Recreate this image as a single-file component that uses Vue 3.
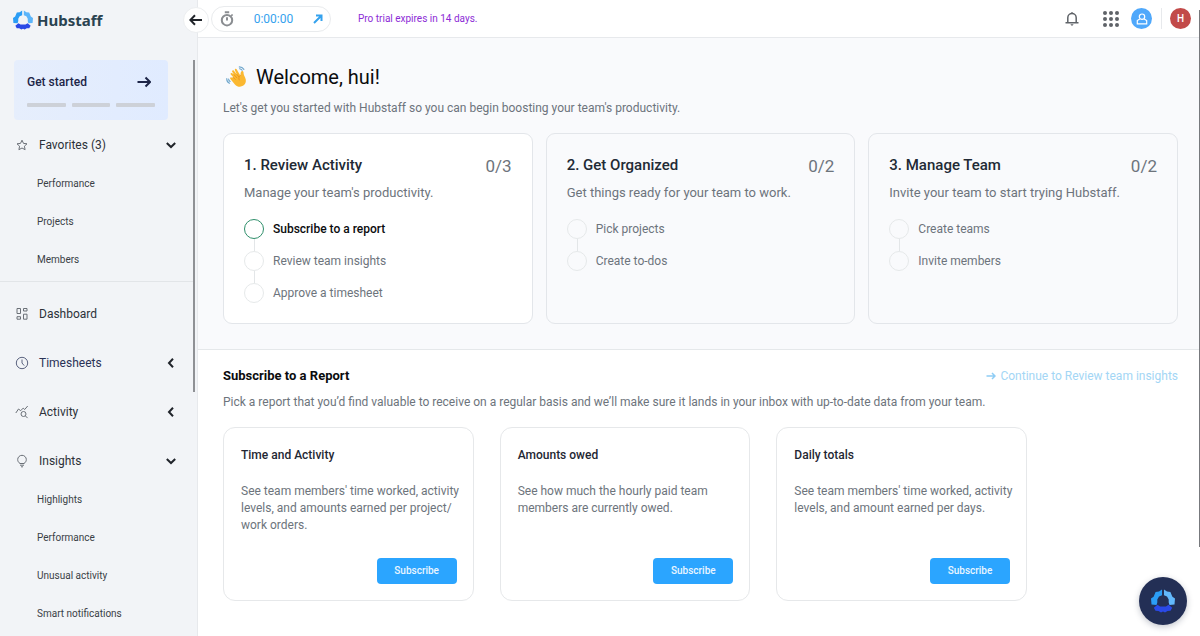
<script setup>
const favorites = ['Performance', 'Projects', 'Members']

const insights = ['Highlights', 'Performance', 'Unusual activity', 'Smart notifications']

const stages = [
  {
    title: '1. Review Activity',
    text: "Manage your team's productivity.",
    count: '0/3',
    active: true,
    steps: ['Subscribe to a report', 'Review team insights', 'Approve a timesheet'],
  },
  {
    title: '2. Get Organized',
    text: 'Get things ready for your team to work.',
    count: '0/2',
    active: false,
    steps: ['Pick projects', 'Create to-dos'],
  },
  {
    title: '3. Manage Team',
    text: 'Invite your team to start trying Hubstaff.',
    count: '0/2',
    active: false,
    steps: ['Create teams', 'Invite members'],
  },
]

const reports = [
  {
    title: 'Time and Activity',
    text: "See team members' time worked, activity levels, and amounts earned per project/ work orders.",
  },
  {
    title: 'Amounts owed',
    text: 'See how much the hourly paid team members are currently owed.',
  },
  {
    title: 'Daily totals',
    text: "See team members' time worked, activity levels, and amount earned per days.",
  },
]
</script>

<template>
  <div class="app">
    <aside class="sidebar">
      <a class="brand" href="#">
        <svg class="brand-mark" viewBox="0 0 24 24" aria-hidden="true">
          <path fill="#2b9df5" d="M11 .5v5.700L8 7.500 6.300 10.500v3L5.500 16 .5 15.500 0 9.500l2.600-1.800L4.600 3 8 2.600z" />
          <path fill="#5cb5fa" d="M13 .5v5.700l3 1.300 1.700 3v3l.8 2.500 5-.5.5-6-2.600-1.800L19.400 3 16 2.600z" />
          <path fill="#2a49e6" d="M6.500 15.800 9 17.500h6l2.500-1.700 3.700 3-1.700 3-3 .2L14 23.500l-2-1-2 1L7.500 22l-3-.2-1.700-3z" />
        </svg>
        <span>Hubstaff</span>
      </a>
      <button class="collapse" type="button" aria-label="Collapse menu">
        <svg viewBox="0 0 14 12" aria-hidden="true"><path d="M13 6H1.500M6 1.300 1.300 6 6 10.700" /></svg>
      </button>

      <a class="start" href="#">
        <span class="start-row">
          <span>Get started</span>
          <svg viewBox="0 0 14 12" aria-hidden="true"><path d="M.5 6h12M8.500 1.500 13 6l-4.500 4.500" /></svg>
        </span>
        <span class="bars"><i></i><i></i><i></i></span>
      </a>

      <nav class="nav" aria-label="Main">
        <div class="group">
          <button class="item" type="button" aria-expanded="true">
            <svg class="ico" viewBox="0 0 14 14" aria-hidden="true"><path d="m7 2.200 1.500 3.200 3.500.4-2.600 2.400.7 3.500L7 10l-3.100 1.700.7-3.500L2 5.800l3.500-.4z" /></svg>
            <span>Favorites (3)</span>
            <svg class="chev" viewBox="0 0 10 10" aria-hidden="true"><path d="M.8 3 5 7l4.200-4" /></svg>
          </button>
          <a v-for="name in favorites" :key="name" class="sub" href="#">{{ name }}</a>
        </div>

        <div class="group group-main">
          <a class="item" href="#">
            <svg class="ico" viewBox="0 0 14 14" aria-hidden="true"><path d="M2 1.500h3.500v5H2zM8.500 1.500H12V4H8.500zM2 9.700h3.500v2.500H2zM8.500 7.200H12v5H8.500z" /></svg>
            <span>Dashboard</span>
          </a>
          <button class="item navy" type="button" aria-expanded="false">
            <svg class="ico" viewBox="0 0 14 14" aria-hidden="true"><circle cx="7" cy="7" r="5.700" /><path d="M7 3.500V7l2.200 2.600" /></svg>
            <span>Timesheets</span>
            <svg class="chev" viewBox="0 0 10 10" aria-hidden="true"><path d="M7 .8 3 5l4 4.200" /></svg>
          </button>
          <button class="item" type="button" aria-expanded="false">
            <svg class="ico" viewBox="0 0 14 14" aria-hidden="true"><path d="M.8 8 3.500 4l2.200 1.700 2.500-2.600L9.700 4.500l3-3.500" /><circle cx="8.500" cy="9" r="2.500" /><path d="m10.400 10.900 2.200 2.200" /></svg>
            <span>Activity</span>
            <svg class="chev" viewBox="0 0 10 10" aria-hidden="true"><path d="M7 .8 3 5l4 4.200" /></svg>
          </button>
          <div>
            <button class="item" type="button" aria-expanded="true">
              <svg class="ico" viewBox="0 0 14 14" aria-hidden="true"><path d="M5 9.500C3.500 8.500 2.700 7.200 2.700 5.600a4.300 4.300 0 0 1 8.600 0c0 1.600-.8 2.900-2.300 3.900zM5 11.200h4M6 12.800h2" /></svg>
              <span>Insights</span>
              <svg class="chev" viewBox="0 0 10 10" aria-hidden="true"><path d="M.8 3 5 7l4.200-4" /></svg>
            </button>
            <a v-for="name in insights" :key="name" class="sub" href="#">{{ name }}</a>
          </div>
        </div>
      </nav>
      <i class="side-thumb"></i>
    </aside>

    <div class="content">
      <header class="topbar">
        <div class="timer">
          <svg class="watch" viewBox="0 0 14 16" aria-hidden="true"><circle cx="7" cy="9.200" r="5.200" /><path d="M4.800 1.200h4.400M7 6.200v3.300M11.300 3.600l1.200 1.200" /></svg>
          <span>0:00:00</span>
          <svg class="out" viewBox="0 0 10 10" aria-hidden="true"><path d="M1 9 8 2M3 1.500h5.500V7" /></svg>
        </div>
        <a class="trial" href="#">Pro trial expires in 14 days.</a>
        <div class="tools">
          <button class="tool bell" type="button" aria-label="Notifications">
            <svg viewBox="0 0 14 14" aria-hidden="true"><path d="M.5 10.700h13M2.800 10.500V5.800a4.200 4.200 0 0 1 8.400 0v4.700" /><path d="M5.300 12.200h3.400L7 13.900zM6.200.3h1.600V2H6.200z" class="solid" /></svg>
          </button>
          <button class="tool apps" type="button" aria-label="Apps">
            <svg viewBox="0 0 16 16" aria-hidden="true">
              <template v-for="y in 3" :key="y"><circle v-for="x in 3" :key="x" :cx="x * 6 - 4" :cy="y * 6 - 4" r="2" /></template>
            </svg>
          </button>
          <button class="tool person" type="button" aria-label="Organization">
            <svg viewBox="0 0 12 12" aria-hidden="true"><circle cx="6" cy="3.700" r="2.700" /><path d="M3.800 6 1.300 7.600v3.200h9.400V7.600L8.200 6" /></svg>
          </button>
          <button class="tool avatar" type="button" aria-label="Account">H</button>
        </div>
      </header>

      <main>
        <section class="hero">
          <h1>
            <svg class="wave" viewBox="0 0 22 22" aria-hidden="true">
              <path fill="#fbb831" d="M7.300 11.300 4.800 8.600c-.9-1.100.5-2.300 1.500-1.400L8 8.700 6.200 5.800c-.7-1.200.9-2.200 1.700-1.100l3 3.800-2-4.300c-.5-1.300 1.200-2 1.900-.8l3.500 6.100c.4-1.300.1-2.800.9-4 .8-1.100 2.300-.4 2.300.8 0 1.700.5 3 1.600 5.200 1.500 3.200.9 6.300-1.700 8.100-2.800 1.900-6.200 1.300-8.500-1.200L4.400 13c-.9-1.100.4-2.200 1.400-1.300z" />
              <path fill="none" stroke="#e58e1e" stroke-width=".8" stroke-linecap="round" d="m7.300 11.500 2 2M8 8.700l2.900 3.100M10.900 8.500l2 2.300M14.200 9.600c-1.700 1.300-1.700 3-1 4.300" />
              <path fill="none" stroke="#6ea6cc" stroke-width="1.100" stroke-linecap="round" d="M.8 12.500c-.2 2 .7 3.800 2.700 4.800M2.600 13c0 1 .6 1.900 1.500 2.500M13.300.9c2 0 3.600.9 4.600 2.500M13.500 2.800c1.100.1 2 .6 2.600 1.500" />
            </svg>
            Welcome, hui!
          </h1>
          <p class="lead">Let's get you started with Hubstaff so you can begin boosting your team's productivity.</p>
          <div class="stages">
            <article v-for="stage in stages" :key="stage.title" class="stage" :class="{ active: stage.active }">
              <div class="stage-head">
                <h2>{{ stage.title }}</h2>
                <span class="count">{{ stage.count }}</span>
              </div>
              <p>{{ stage.text }}</p>
              <ol>
                <li v-for="step in stage.steps" :key="step"><i class="dot"></i>{{ step }}</li>
              </ol>
            </article>
          </div>
        </section>

        <section class="reports">
          <div class="reports-head">
            <h2>Subscribe to a Report</h2>
            <a href="#">
              <svg viewBox="0 0 10 8" aria-hidden="true"><path d="M.5 4h8.500M6 1l3 3-3 3" /></svg>
              Continue to Review team insights
            </a>
          </div>
          <p class="note">Pick a report that you’d find valuable to receive on a regular basis and we’ll make sure it lands in your inbox with up-to-date data from your team.</p>
          <div class="cards">
            <article v-for="report in reports" :key="report.title" class="card">
              <h3>{{ report.title }}</h3>
              <p>{{ report.text }}</p>
              <button type="button">Subscribe</button>
            </article>
          </div>
        </section>
      </main>
    </div>

    <button class="fab" type="button" aria-label="Open help">
      <svg viewBox="0 0 24 24" aria-hidden="true">
        <path fill="#2b9df5" d="M11 .5v5.700L8 7.500 6.300 10.500v3L5.500 16 .5 15.500 0 9.500l2.600-1.800L4.600 3 8 2.600z" />
        <path fill="#62b8fb" d="M13 .5v5.700l3 1.300 1.700 3v3l.8 2.500 5-.5.5-6-2.600-1.800L19.400 3 16 2.600z" />
        <path fill="#2a49e6" d="M6.500 15.800 9 17.500h6l2.500-1.700 3.700 3-1.700 3-3 .2L14 23.500l-2-1-2 1L7.500 22l-3-.2-1.700-3z" />
      </svg>
    </button>
    <i class="page-thumb"></i>
  </div>
</template>

<style>
body {
  margin: 0;
  background: #fff;
}
</style>

<style scoped>
.app {
  position: relative;
  display: flex;
  min-height: 100vh;
  font-family: Roboto, "Liberation Sans", sans-serif;
  font-size: 12px;
  line-height: 16px;
  color: #6d747c;
}

.app * {
  box-sizing: border-box;
}

button {
  padding: 0;
  border: 0;
  background: none;
  font: inherit;
  color: inherit;
  cursor: pointer;
}

a {
  color: inherit;
  text-decoration: none;
}

h1,
h2,
h3,
p,
ol {
  margin: 0;
  padding: 0;
}

svg {
  display: block;
  flex: none;
  fill: none;
}

/* Sidebar */
.sidebar {
  position: relative;
  flex: none;
  width: 198px;
  border-right: 1px solid #e7e9ec;
  background: #f2f4f7;
}

.brand {
  display: flex;
  align-items: center;
  gap: 4px;
  height: 40px;
  padding-left: 13px;
  font-family: "Noto Sans", "Open Sans", sans-serif;
  font-size: 15px;
  font-weight: 700;
  color: #2a4351;
}

.brand-mark {
  width: 20px;
  height: 20px;
}

.collapse {
  position: absolute;
  top: 7px;
  right: -12px;
  z-index: 2;
  display: grid;
  place-items: center;
  width: 26px;
  height: 26px;
  border: 1px solid #eceef0;
  border-radius: 50%;
  background: #fff;
}

.collapse svg {
  width: 14px;
  height: 12px;
  stroke: #20242a;
  stroke-width: 2;
}

.start {
  display: block;
  margin: 20px 29px 6px 14px;
  padding: 12px 13px 13px;
  border-radius: 4px;
  background: linear-gradient(90deg, #e6eefc, #e0ebff);
}

.start-row {
  display: flex;
  align-items: center;
  justify-content: space-between;
  height: 20px;
  padding-right: 4px;
  font-weight: 500;
  color: #1d2548;
}

.start-row svg {
  width: 14px;
  height: 12px;
  stroke: #1d2548;
  stroke-width: 2;
}

.bars {
  display: grid;
  grid-template-columns: repeat(3, 1fr);
  gap: 6px;
  margin-top: 11px;
}

.bars i {
  height: 4px;
  border-radius: 1px;
  background: #cdd1d8;
}

.group-main {
  display: grid;
  gap: 11px;
  margin-top: 3px;
  padding-top: 13px;
  border-top: 1px solid #e2e5e8;
}

.nav {
  margin-right: 4px;
}

.item {
  display: flex;
  align-items: center;
  width: 100%;
  height: 38px;
  padding: 0 17px 0 15px;
  font-size: 12px;
  color: #2c3138;
}

.item.navy {
  color: #2a3256;
}

.ico {
  width: 14px;
  height: 14px;
  margin-right: 10px;
  stroke: #6b7077;
  stroke-width: 1;
}

.navy .ico {
  stroke: #5c6480;
}

.chev {
  width: 10px;
  height: 10px;
  margin-left: auto;
  stroke: #20242a;
  stroke-width: 2;
}

.sub {
  display: flex;
  align-items: center;
  height: 38px;
  padding: 2px 0 0 37px;
  font-size: 10px;
  color: #3a3f46;
}

.side-thumb {
  position: absolute;
  top: 60px;
  right: 2px;
  width: 2px;
  height: 332px;
  background: #8f9195;
}

/* Top bar */
.content {
  flex: 1;
  min-width: 0;
}

.topbar {
  display: flex;
  align-items: center;
  height: 38px;
  padding: 0 9px 0 13px;
  border-bottom: 1px solid #e7e9ec;
}

.timer {
  display: flex;
  align-items: center;
  justify-content: space-between;
  width: 120px;
  height: 26px;
  padding: 0 7px 0 8px;
  border: 1px solid #e9ebed;
  border-radius: 13px;
  font-size: 12px;
  color: #35a2ee;
}

.watch {
  width: 14px;
  height: 16px;
  stroke: #8a8d91;
  stroke-width: 2;
}

.out {
  width: 10px;
  height: 10px;
  stroke: #35a2ee;
  stroke-width: 2;
}

.trial {
  margin-left: 27px;
  font-size: 10px;
  color: #8d2bd6;
}

.tools {
  display: flex;
  align-items: center;
  margin-left: auto;
}

.bell svg {
  width: 14px;
  height: 14px;
  stroke: #5f6368;
  stroke-width: 1.5;
}

.bell .solid {
  fill: #5f6368;
  stroke: none;
}

.apps {
  margin-left: 24px;
}

.apps svg {
  width: 16px;
  height: 16px;
  fill: #5f6368;
}

.person,
.avatar {
  display: grid;
  place-items: center;
  width: 21px;
  height: 21px;
  border-radius: 50%;
}

.person {
  margin-left: 12px;
  background: #4fa8fb;
}

.person svg {
  width: 12px;
  height: 12px;
  stroke: #fff;
  stroke-width: 1.2;
}

.avatar {
  position: relative;
  margin-left: 18px;
  background: #c24a49;
  font-size: 10px;
  font-weight: 500;
  color: #fff;
}

.avatar::before {
  content: "";
  position: absolute;
  top: 0;
  left: -9px;
  width: 1px;
  height: 21px;
  background: #e7e9ec;
}

/* Welcome */
.hero {
  padding: 26px 22px 25px 25px;
  border-bottom: 1px solid #e5e8ea;
  background: #f9fafc;
}

h1 {
  display: flex;
  align-items: center;
  gap: 8px;
  height: 26px;
  padding-left: 3px;
  font-size: 20px;
  font-weight: 400;
  color: #0b0c0e;
}

.wave {
  width: 22px;
  height: 22px;
}

.lead {
  margin-top: 10px;
}

.stages {
  display: grid;
  grid-template-columns: repeat(3, minmax(0, 1fr));
  gap: 13px;
  margin-top: 17px;
}

.stage {
  padding: 20px;
  border: 1px solid #e3e6ea;
  border-radius: 9px;
}

.stage.active {
  background: #fff;
}

.stage-head {
  display: flex;
  justify-content: space-between;
  height: 24px;
}

.stage h2 {
  font-size: 15px;
  font-weight: 500;
  line-height: 22px;
  color: #222a35;
}

.count {
  font-size: 17px;
  line-height: 24px;
}

.stage p {
  margin-top: 6px;
  font-size: 13px;
  line-height: 18px;
}

.stage ol {
  display: grid;
  gap: 12px;
  margin-top: 17px;
  list-style: none;
}

.stage li {
  position: relative;
  display: flex;
  align-items: center;
  gap: 9px;
  height: 20px;
}

.stage li + li::before {
  content: "";
  position: absolute;
  top: -12px;
  left: 10px;
  width: 1px;
  height: 12px;
  background: #e3e6e8;
}

.dot {
  width: 20px;
  height: 20px;
  border: 1px solid #e6e9ea;
  border-radius: 50%;
}

.active li:first-child {
  font-weight: 500;
  color: #0b0c0e;
}

.active li:first-child .dot {
  border-color: #2f8f6b;
}

/* Reports */
.reports {
  padding: 16px 22px 34px 25px;
}

.reports-head {
  display: flex;
  justify-content: space-between;
  align-items: center;
  height: 20px;
}

.reports h2 {
  font-size: 13px;
  font-weight: 700;
  color: #0b0c0e;
}

.reports-head a {
  display: flex;
  align-items: center;
  gap: 4px;
  color: #a3d6f5;
}

.reports-head a svg {
  width: 10px;
  height: 8px;
  stroke: #8fcdf5;
  stroke-width: 1.5;
}

.note {
  margin-top: 8px;
}

.cards {
  display: grid;
  grid-template-columns: repeat(3, minmax(0, 1fr));
  gap: 26px;
  max-width: 804px;
  margin-top: 17px;
}

.card {
  display: flex;
  flex-direction: column;
  padding: 19px 16px 16px 17px;
  border: 1px solid #e6e8ea;
  border-radius: 12px;
}

.card h3 {
  font-size: 12px;
  font-weight: 500;
  color: #1f2733;
}

.card p {
  min-height: 51px;
  margin: 20px -8px 24px 0;
  font-size: 12px;
  line-height: 17px;
}

.card button {
  align-self: flex-end;
  width: 80px;
  height: 26px;
  border-radius: 4px;
  background: #2ba5ff;
  font-size: 10px;
  font-weight: 500;
  color: #e9f5ff;
}

.fab {
  position: fixed;
  right: 13px;
  bottom: 11px;
  display: grid;
  place-items: center;
  width: 48px;
  height: 48px;
  border-radius: 50%;
  background: #232f55;
  box-shadow: 0 2px 6px rgba(20, 30, 60, 0.25);
}

.fab svg {
  width: 24px;
  height: 24px;
}

.page-thumb {
  position: absolute;
  top: 10px;
  right: 0;
  width: 1px;
  height: 537px;
  background: #77797d;
}
</style>
